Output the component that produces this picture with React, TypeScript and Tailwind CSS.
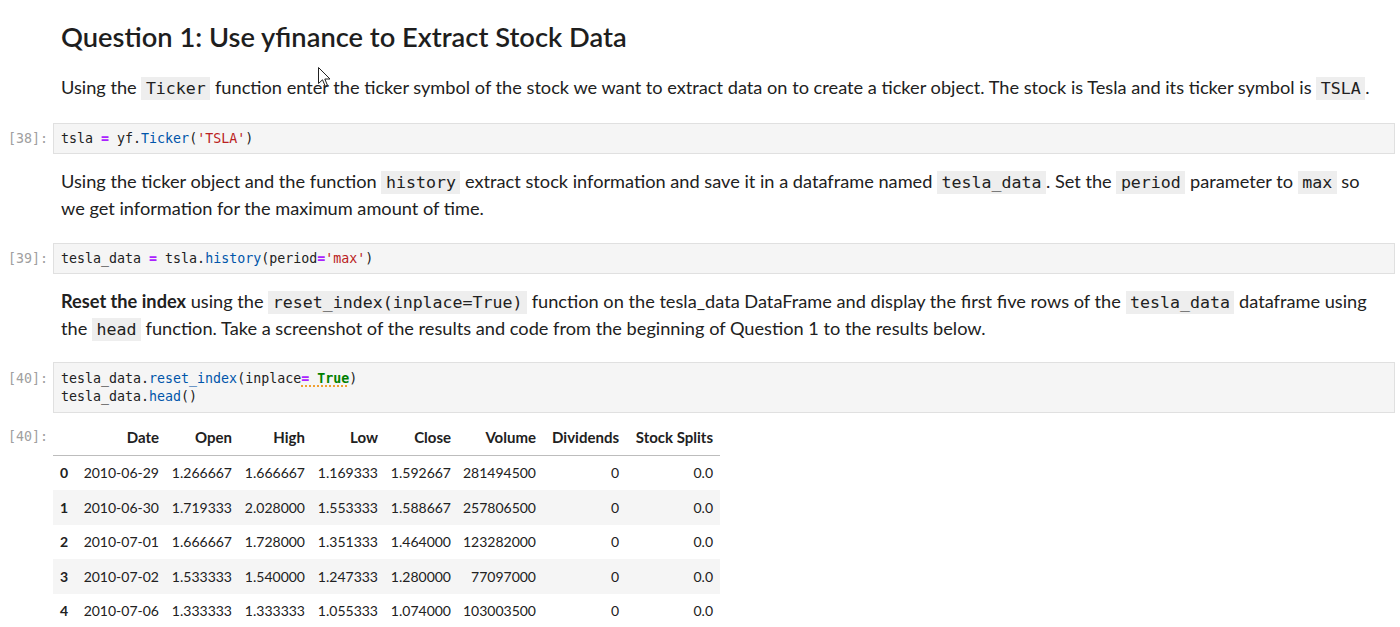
import React from "react";

const C = ({ children }: { children: React.ReactNode }) => (
  <code className="bg-[#eeeeee] px-[4.5px] py-[2px] font-['DejaVu_Sans_Mono',monospace] text-[16.6px] leading-none text-[#212121]">
    {children}
  </code>
);

const Prompt = ({ n, className = "" }: { n: number; className?: string }) => (
  <div className={"w-[53px] shrink-0 pr-[5px] text-right font-['DejaVu_Sans_Mono',monospace] text-[13.3px] leading-[18px] text-[#a0a0a0] " + className}>
    [{n}]:
  </div>
);

const rows = [
  ["0", "2010-06-29", "1.266667", "1.666667", "1.169333", "1.592667", "281494500", "0", "0.0"],
  ["1", "2010-06-30", "1.719333", "2.028000", "1.553333", "1.588667", "257806500", "0", "0.0"],
  ["2", "2010-07-01", "1.666667", "1.728000", "1.351333", "1.464000", "123282000", "0", "0.0"],
  ["3", "2010-07-02", "1.533333", "1.540000", "1.247333", "1.280000", "77097000", "0", "0.0"],
  ["4", "2010-07-06", "1.333333", "1.333333", "1.055333", "1.074000", "103003500", "0", "0.0"],
];
const headers = ["", "Date", "Open", "High", "Low", "Close", "Volume", "Dividends", "Stock Splits"];
const widths = ["w-[22px]", "w-[91px]", "w-[73px]", "w-[73px]", "w-[73px]", "w-[73px]", "w-[85px]", "w-[83px]", "w-[94px]"];

export default function App() {
  const mono = "font-['DejaVu_Sans_Mono',monospace] text-[13.3px] leading-[18px] text-[#212121]";
  return (
    <div className="relative w-[1400px] h-[627px] overflow-hidden bg-white font-['Lato',sans-serif] text-[#212121]">
      <div className="flex flex-col pr-[5px]">
        {/* heading */}
        <div className="flex pt-[19px]">
          <div className="w-[53px] shrink-0" />
          <h2 className="px-2 text-[27.3px] leading-[36px] font-semibold text-[#1e1e1e]">
            Question 1: Use yfinance to Extract Stock Data
          </h2>
        </div>
        {/* p1 */}
        <div className="flex mt-[18.5px]">
          <div className="w-[53px] shrink-0" />
          <p className="px-2 text-[18.2px] leading-[27px] whitespace-nowrap">
            Using the <C>Ticker</C> function enter the ticker symbol of the stock we want to extract data on to create a ticker object. The stock is Tesla and its ticker symbol is <C>TSLA</C>.
          </p>
        </div>
        {/* code 1 */}
        <div className="flex mt-[22.5px]">
          <Prompt n={38} className="pt-[6.5px]" />
          <div className={"flex-1 h-[31px] border border-[#e0e0e0] bg-[#f5f5f5] px-[7px] py-[5.5px] " + mono}>
            tsla <span className="font-bold text-[#aa22ff]">=</span> yf.<span className="text-[#0055aa]">Ticker</span>(<span className="text-[#ba2121]">'TSLA'</span>)
          </div>
        </div>
        {/* p2 */}
        <div className="flex mt-[13.5px]">
          <div className="w-[53px] shrink-0" />
          <p className="px-2 text-[18.2px] leading-[27px] whitespace-nowrap">
            Using the ticker object and the function <C>history</C> extract stock information and save it in a dataframe named <C>tesla_data</C>. Set the <C>period</C> parameter to <C>max</C> so
            <br />
            we get information for the maximum amount of time.
          </p>
        </div>
        {/* code 2 */}
        <div className="flex mt-[21.5px]">
          <Prompt n={39} className="pt-[6.5px]" />
          <div className={"flex-1 h-[31px] border border-[#e0e0e0] bg-[#f5f5f5] px-[7px] py-[5.5px] " + mono}>
            tesla_data <span className="font-bold text-[#aa22ff]">=</span> tsla.<span className="text-[#0055aa]">history</span>(period<span className="font-bold text-[#aa22ff]">=</span><span className="text-[#ba2121]">'max'</span>)
          </div>
        </div>
        {/* p3 */}
        <div className="flex mt-[13.5px]">
          <div className="w-[53px] shrink-0" />
          <p className="px-2 text-[18.2px] leading-[27px] whitespace-nowrap">
            <strong className="font-bold">Reset the index</strong> using the <C>reset_index(inplace=True)</C> function on the tesla_data DataFrame and display the first five rows of the <C>tesla_data</C> dataframe using
            <br />
            the <C>head</C> function. Take a screenshot of the results and code from the beginning of Question 1 to the results below.
          </p>
        </div>
        {/* code 3 */}
        <div className="flex mt-[20.5px]">
          <Prompt n={40} className="pt-[7.5px]" />
          <div className={"flex-1 h-[51px] border border-[#e0e0e0] bg-[#f5f5f5] px-[7px] py-[6.5px] " + mono}>
            <div>
              tesla_data.<span className="text-[#0055aa]">reset_index</span>(inplace
              <span className="underline decoration-dotted decoration-[#f0a030] decoration-2 underline-offset-[3px]">
                <span className="font-bold text-[#aa22ff]">=</span> <span className="font-bold text-[#008000]">True</span>
              </span>
              )
            </div>
            <div>
              tesla_data.<span className="text-[#0055aa]">head</span>()
            </div>
          </div>
        </div>
        {/* output */}
        <div className="flex mt-[6.5px]">
          <Prompt n={40} className="pt-[8.5px]" />
          <div className="text-[14px] text-[#212121]">
            <div className="flex h-[36px] items-center border-b border-[#bdbdbd] text-[15px] font-bold">
              {headers.map((h, i) => (
                <div key={i} className={widths[i] + " pr-[7px] text-right whitespace-nowrap"}>
                  {h}
                </div>
              ))}
            </div>
            {rows.map((r, ri) => (
              <div key={ri} className={"flex h-[34.5px] items-center " + (ri % 2 === 1 ? "bg-[#f5f5f5]" : "bg-white")}>
                {r.map((c, ci) => (
                  <div key={ci} className={widths[ci] + " pr-[7px] text-right whitespace-nowrap " + (ci === 0 ? "font-bold" : "")}>
                    {c}
                  </div>
                ))}
              </div>
            ))}
          </div>
        </div>
      </div>
      {/* mouse cursor */}
      <svg className="absolute left-[318px] top-[67px]" width="13" height="21" viewBox="0 0 13 21">
        <path d="M0.5 0.5 L0.5 16.5 L4.5 12.8 L7.2 19.2 L9.4 18.2 L6.8 12 L12 12 Z" fill="white" stroke="#222" strokeWidth="1" strokeLinejoin="round" />
      </svg>
    </div>
  );
}
